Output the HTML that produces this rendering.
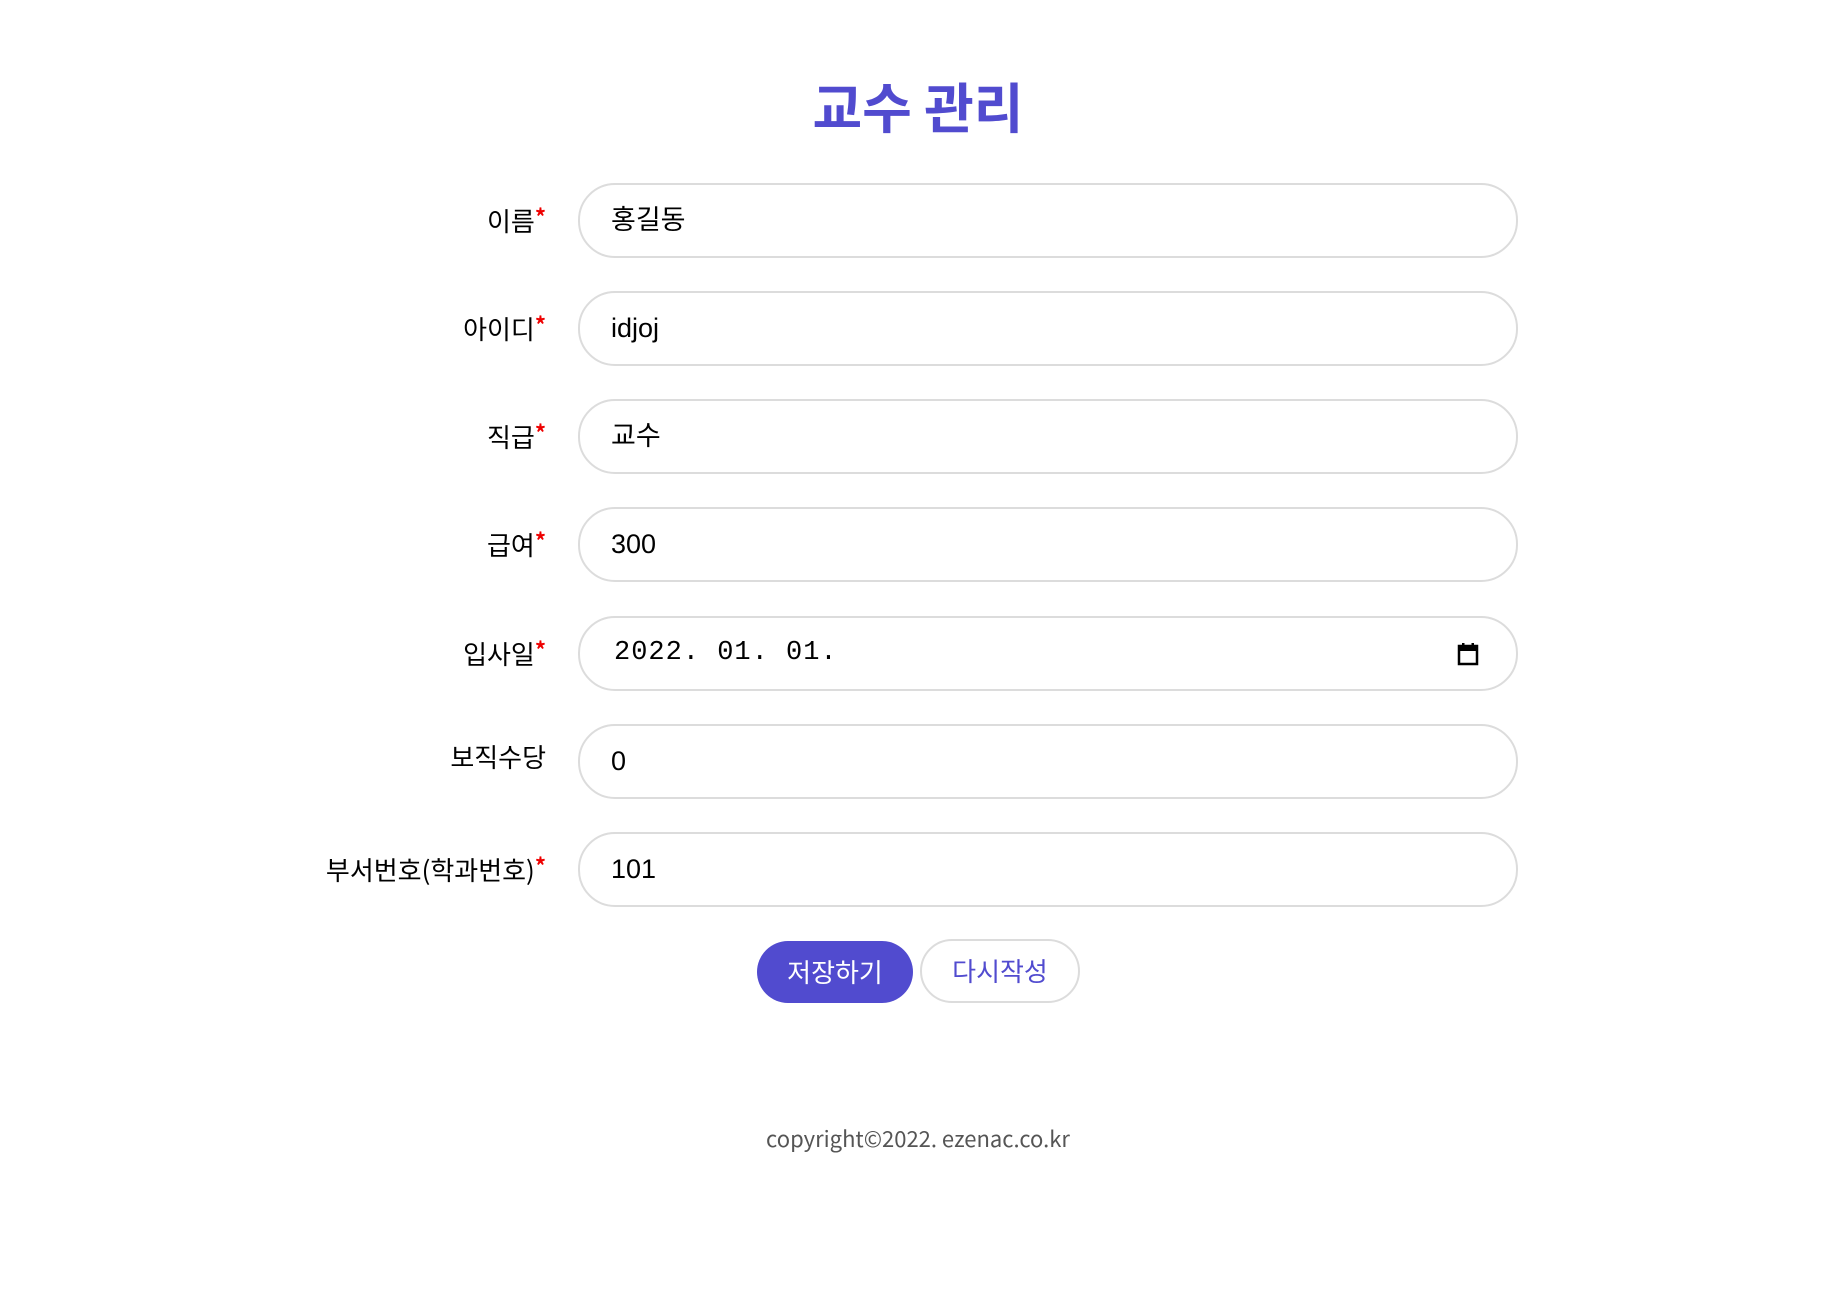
<!DOCTYPE html>
<html><head><meta charset="utf-8">
<style>
html,body{margin:0;padding:0;background:#fff;width:1836px;height:1312px;overflow:hidden;}
body{position:relative;font-family:"Liberation Sans","Noto Sans CJK KR",sans-serif;color:#000;}
h1{position:absolute;left:0;width:1836px;top:70px;margin:0;text-align:center;font-size:54px;font-weight:bold;color:#514bcf;line-height:70px;font-family:"Noto Sans CJK KR",sans-serif;}
.lab{position:absolute;right:1290px;height:74px;line-height:66px;font-size:26px;font-family:"Noto Sans CJK KR",sans-serif;white-space:nowrap;}
.lab b{color:#e00;font-weight:bold;font-size:22px;vertical-align:6px;}
.in{position:absolute;left:578px;width:936px;height:71px;border:2px solid #dcdcdc;border-radius:37px;box-sizing:content-box;}
.in span{position:absolute;left:31px;top:0;line-height:71px;font-size:27px;font-family:"Liberation Sans","Noto Sans CJK KR",sans-serif;}
.in span.mono{font-family:"Liberation Mono",monospace;font-size:27px;left:34px;letter-spacing:1px;}
.btn{position:absolute;height:62px;line-height:62px;text-align:center;font-size:26px;border-radius:32px;font-family:"Noto Sans CJK KR",sans-serif;}
.save{left:757px;top:941px;width:156px;background:#514bcf;color:#fff;}
.reset{left:920px;top:939px;width:156px;height:60px;line-height:60px;border:2px solid #dcdcdc;color:#514bcf;background:#fff;}
.foot{position:absolute;left:0;width:1836px;top:1122px;text-align:center;font-size:22px;color:#555;font-family:"Noto Sans CJK KR",sans-serif;}
</style></head><body>
<h1>교수 관리</h1>

<div class="lab" style="top:183px">이름<b>*</b></div>
<div class="in" style="top:183px"><span>홍길동</span></div>

<div class="lab" style="top:291px">아이디<b>*</b></div>
<div class="in" style="top:291px"><span>idjoj</span></div>

<div class="lab" style="top:399px">직급<b>*</b></div>
<div class="in" style="top:399px"><span>교수</span></div>

<div class="lab" style="top:507px">급여<b>*</b></div>
<div class="in" style="top:507px"><span>300</span></div>

<div class="lab" style="top:616px">입사일<b>*</b></div>
<div class="in" style="top:616px"><span class="mono">2022. 01. 01.</span>
<svg style="position:absolute;left:877px;top:24px" width="22" height="24" viewBox="0 0 22 24"><rect x="2" y="4" width="18" height="18" fill="none" stroke="#000" stroke-width="2.5"/><rect x="2" y="4" width="18" height="5" fill="#000"/><rect x="5" y="1" width="2.5" height="5" fill="#000"/><rect x="14.5" y="1" width="2.5" height="5" fill="#000"/></svg>
</div>

<div class="lab" style="top:724px">보직수당</div>
<div class="in" style="top:724px"><span>0</span></div>

<div class="lab" style="top:832px">부서번호(학과번호)<b>*</b></div>
<div class="in" style="top:832px"><span>101</span></div>

<div class="btn save">저장하기</div>
<div class="btn reset">다시작성</div>

<div class="foot">copyright©2022. ezenac.co.kr</div>
</body></html>
